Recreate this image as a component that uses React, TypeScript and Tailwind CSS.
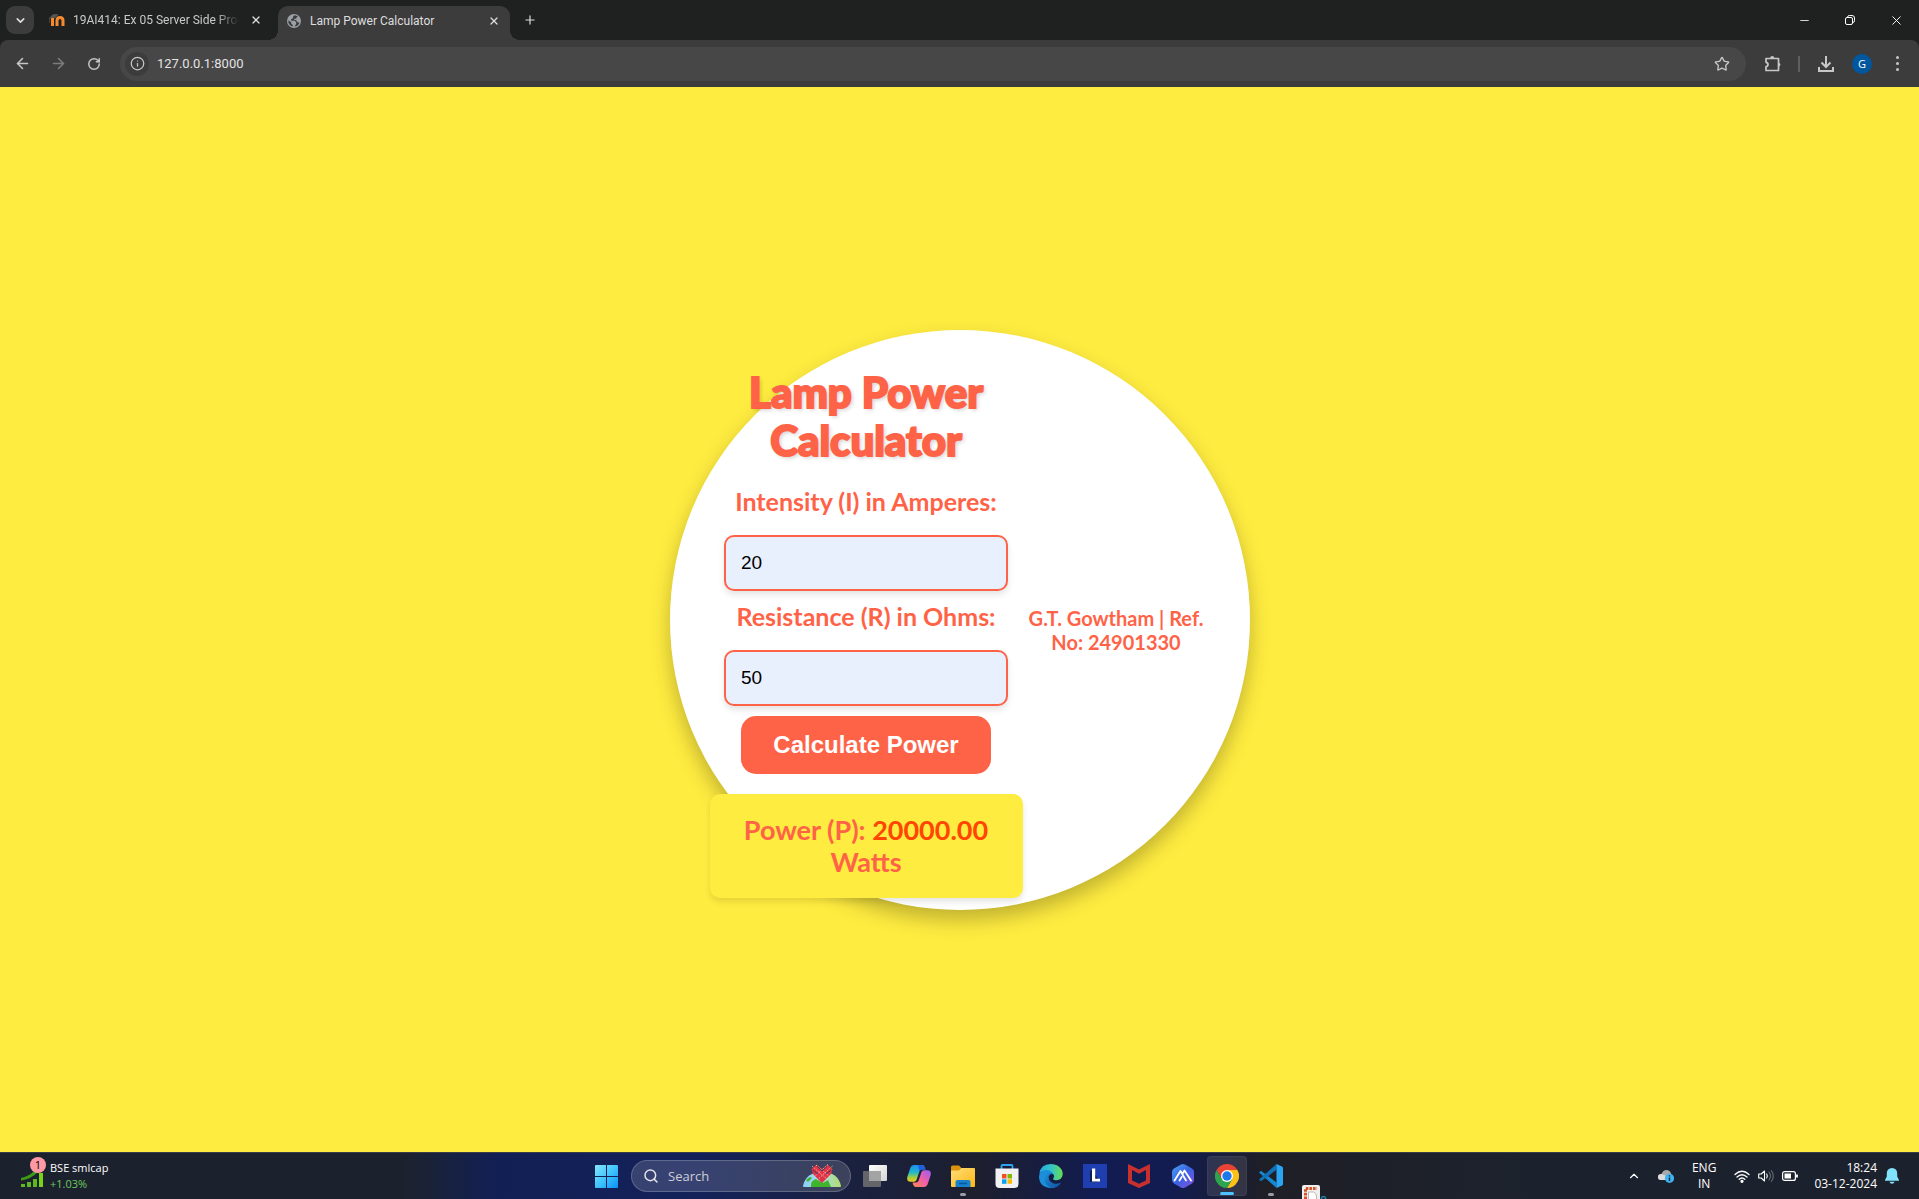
import { useState, type ReactNode } from 'react';
import {
  ArrowLeft,
  ArrowRight,
  ChevronDown,
  ChevronUp,
  Info,
  Minus,
  Plus,
  RotateCw,
  Search,
  Star,
  X,
} from 'lucide-react';

function MoodleIcon() {
  return (
    <svg viewBox="0 0 18 14" className="h-[14px] w-[18px] shrink-0" fill="none">
      <path d="M1 5.500 5 1.500h5L7 5H1.500v5" fill="#5a5550" stroke="#5a5550" strokeWidth=".6" />
      <path d="M4.500 13V5M9 13V7.500q0-3 3-3t3 3V13" stroke="#f68a2e" strokeWidth="3" />
    </svg>
  );
}

function GlobeIcon() {
  return (
    <svg viewBox="0 0 14 14" className="h-[14px] w-[14px] shrink-0">
      <circle cx="7" cy="7" r="7" fill="#9aa0a6" />
      <path
        d="M7.500 1.300 6 2.800v1.400L4.200 5v1.800h3.600l1.400 1.400v1.600L7.600 12.600q3.600-.4 4.900-3.800L10.200 8 9 6H7.200V4.800H9.400V3.400L11 2.600Q9.500 1.400 7.500 1.300ZM1.400 6.200q-.5 5 4.400 6.400V11L4.200 9.800V8.300Z"
        fill="#3c3c3c"
      />
    </svg>
  );
}

function RestoreIcon() {
  return (
    <svg viewBox="0 0 10 10" className="h-[10px] w-[10px]" fill="none" stroke="#fff">
      <rect x=".5" y="2.500" width="7" height="7" rx="1.500" />
      <path d="M2.500 2.300Q2.600.5 4.300.5H7q2.500 0 2.500 2.500v2.700q0 1.700-1.800 1.800" />
    </svg>
  );
}

function ExtensionIcon() {
  return (
    <svg viewBox="0 0 18 18" className="h-[18px] w-[18px]" fill="none" stroke="#c7c7c7" strokeWidth="1.700" strokeLinejoin="round">
      <path d="M2 3.500h12.500v12H2v-3.800q2-.3 2-2.200T2 7.300Z" />
      <path d="M6.200 3a2 2 0 0 1 4 0ZM15 7.700a2 2 0 0 1 0 3.800Z" fill="#c7c7c7" stroke="none" />
    </svg>
  );
}

function DownloadIcon() {
  return (
    <svg viewBox="0 0 16 16" className="h-4 w-4" fill="none" stroke="#c7c7c7" strokeWidth="2">
      <path d="M8 0v10.500M3.500 6.500 8 11l4.500-4.500M1 11v4h14v-4" />
    </svg>
  );
}

function StocksIcon() {
  return (
    <svg viewBox="0 0 24 22" className="h-[22px] w-6">
      <path d="M1 13Q10 11 15 5l-1-1.500 6-1-1 6-1.500-1Q11 14 1 15.500Z" fill="#3f9a16" />
      <g fill="#5fb81c">
        <rect x="1" y="19" width="4" height="3" />
        <rect x="7" y="17" width="4" height="5" />
        <rect x="13" y="14" width="4" height="8" />
        <rect x="19" y="8" width="4" height="14" fill="#78d216" />
      </g>
    </svg>
  );
}

function WindowsIcon() {
  return (
    <svg viewBox="0 0 23 23" className="h-[23px] w-[23px]">
      <defs>
        <linearGradient id="win" x1="0" y1="0" x2="1" y2="1">
          <stop offset="0" stopColor="#86e4fd" />
          <stop offset=".5" stopColor="#41c5fb" />
          <stop offset="1" stopColor="#0a90f8" />
        </linearGradient>
      </defs>
      <path d="M0 1q0-1 1-1h10v11H0ZM12 0h10q1 0 1 1v10H12ZM0 12h11v11H1q-1 0-1-1ZM12 12h11v10q0 1-1 1H12Z" fill="url(#win)" />
    </svg>
  );
}

function HeartHillIcon() {
  return (
    <svg viewBox="0 0 38 24" className="h-6 w-[38px]">
      <defs>
        <linearGradient id="hill">
          <stop offset="0" stopColor="#8ccdf5" />
          <stop offset=".45" stopColor="#9fdcf2" />
          <stop offset="1" stopColor="#b5dc6a" />
        </linearGradient>
      </defs>
      <path d="M0 22Q3 8 19 8t19 14q0 1-1 1H1q-1 0-1-1Z" fill="url(#hill)" />
      <path d="M8 23q-1-6 5-8l7 4 5-3 3 7ZM3 16l4-3 2 1-4 4Z" fill="#3fb52c" />
      <path d="m8.500 5 5-4.500L19 5l5.500-4.500 5 4.500-1.500 5-9 9-9-9Z" fill="#e03444" />
      <path d="m9 2 16 14M13 1l14 12M25 .5 11 13M29.500 2 13 17" stroke="#fbd5d8" strokeWidth=".7" strokeDasharray="1.500 1.300" />
      <path d="m10 6 5 4M14 2l5 5M28 6l-5 4M24 2l-5 5" stroke="#2e4463" strokeWidth="1" />
    </svg>
  );
}

function TaskViewIcon() {
  return (
    <svg viewBox="0 0 24 22" className="h-[22px] w-6">
      <defs>
        <linearGradient id="tv" x1="0" y1="0" x2="1" y2="1">
          <stop offset="0" stopColor="#fff" />
          <stop offset="1" stopColor="#d4d4d4" />
        </linearGradient>
      </defs>
      <rect x="6" width="18" height="16" rx="1" fill="url(#tv)" />
      <rect y="6" width="18" height="16" rx="1" fill="#6e6e6e" opacity=".88" />
      <path d="M6 6h12v10H6Z" fill="#a3a3a3" />
    </svg>
  );
}

function CopilotIcon() {
  return (
    <svg viewBox="0 0 24 22" className="h-[22px] w-6">
      <defs>
        <linearGradient id="cpa" x1="0" y1="0" x2="0" y2="1">
          <stop offset="0" stopColor="#1b8ff0" />
          <stop offset=".45" stopColor="#22b8c9" />
          <stop offset=".75" stopColor="#a6cf3c" />
          <stop offset="1" stopColor="#f4c81f" />
        </linearGradient>
        <linearGradient id="cpb" x1="1" y1="0" x2="0" y2="1">
          <stop offset="0" stopColor="#9a5cf5" />
          <stop offset=".5" stopColor="#ef5fa8" />
          <stop offset="1" stopColor="#ff8a4c" />
        </linearGradient>
      </defs>
      <path d="M7 0h8q2 0 2.700 2l.8 2.500H15q-2 0-2.600 2L9.500 15q-.6 1.800-2.500 1.800H3.500Q-.5 16.800.3 12L3.300 3Q4.300 0 7 0Z" fill="url(#cpa)" />
      <path d="M11 0h4q2 0 2.700 2l.8 2.500H15q-2 0-2.600 2Z" fill="#1f5fe0" />
      <path d="M17 22H9q-2 0-2.700-2l-.8-2.500H9q2 0 2.600-2L14.500 7q.6-1.800 2.500-1.800h3.500q4 0 3.200 4.800l-3 9Q19.700 22 17 22Z" fill="url(#cpb)" />
    </svg>
  );
}

function FolderIcon() {
  return (
    <svg viewBox="0 0 24 22" className="h-[22px] w-6">
      <defs>
        <linearGradient id="fold" x1="0" y1="0" x2="1" y2="1">
          <stop offset="0" stopColor="#ffdd7a" />
          <stop offset="1" stopColor="#fdb813" />
        </linearGradient>
      </defs>
      <path d="M0 2q0-1.500 1.500-1.500H8L10.500 3H22v6H0Z" fill="#d9930d" />
      <path d="M0 5.500h8L10.500 3H23q1 0 1 1v17q0 1-1 1H1q-1 0-1-1Z" fill="url(#fold)" />
      <path d="M4.500 22v-5q0-2 2-2h11q2 0 2 2v5Z" fill="#1781cf" />
      <path d="M8 18.500h8" stroke="#0a5796" strokeWidth="1.500" />
    </svg>
  );
}

function StoreIcon() {
  return (
    <svg viewBox="0 0 24 24" className="h-6 w-6">
      <path d="M6.500 5V2q0-1 1-1h9q1 0 1 1v3" fill="none" stroke="#2ba7ef" strokeWidth="1.800" />
      <path d="M.5 4.500h23V20q0 4-4 4h-15q-4 0-4-4Z" fill="#f1f1f3" />
      <path d="M7 10h4.500v4.500H7Z" fill="#f25022" />
      <path d="M12.500 10H17v4.500h-4.500Z" fill="#7fba00" />
      <path d="M7 15.300h4.500v4.500H7Z" fill="#00a4ef" />
      <path d="M12.500 15.300H17v4.500h-4.500Z" fill="#ffb900" />
    </svg>
  );
}

function EdgeIcon() {
  return (
    <svg viewBox="0 0 24 24" className="h-6 w-6">
      <defs>
        <linearGradient id="edA" x1="0" y1=".3" x2="1" y2=".3">
          <stop offset="0" stopColor="#2aa8e6" />
          <stop offset=".5" stopColor="#33c4c9" />
          <stop offset="1" stopColor="#68dd50" />
        </linearGradient>
        <linearGradient id="edB" x1="0" y1="0" x2="1" y2="1">
          <stop offset="0" stopColor="#1c90dc" />
          <stop offset="1" stopColor="#0f4f9e" />
        </linearGradient>
      </defs>
      <path d="M.3 10Q1.500 0 12 0q7.500 0 10.800 6Q25 11 22 14.500q-2 2-5.500 1.700-3-.2-2.400-1.500 1.500-2 .6-4Q13 8 9 7 3 6 .3 10Z" fill="url(#edA)" />
      <path d="M0 12q.8-6 7-6 5.500.3 7.300 4.200Q10.500 9 9 12q-1.500 4.500 2.500 7.500 4.500 2.800 10.300-.8Q18 24 12 24 0 23.500 0 12Z" fill="#1c8fdb" />
      <path d="M8 9.500q3-2 6.500.8Q10.500 9 9.700 12.500q-.5 5 5 7 3.600 1 7.100-.8Q19 23.700 13 24 6 22 5.500 16 5.500 12 8 9.500Z" fill="url(#edB)" />
    </svg>
  );
}

function LIcon() {
  return (
    <svg viewBox="0 0 24 24" className="h-6 w-6">
      <path d="M0 0h24v24H0Z" fill="#1f3fb0" />
      <path d="M7 7v11h7l2-1.500L9 6Z" fill="#0c1f4a" />
      <path d="M9 4.500h3.200v10.300H17v2.700H9Z" fill="#fff" />
    </svg>
  );
}

function McAfeeIcon() {
  return (
    <svg viewBox="0 0 22 24" className="h-6 w-[22px]">
      <path d="m0 0 11 5.500L22 0v19l-11 5-11-5Zm4 6v10.500l7 3.300 7-3.300V6l-7 3.800Z" fill="#c8302f" />
    </svg>
  );
}

function PeakIcon() {
  return (
    <svg viewBox="0 0 22 24" className="h-6 w-[22px]">
      <defs>
        <linearGradient id="peak" x1="0" y1="0" x2="1" y2="1">
          <stop offset="0" stopColor="#4ba3f7" />
          <stop offset=".5" stopColor="#3a62e2" />
          <stop offset="1" stopColor="#8a4fe0" />
        </linearGradient>
      </defs>
      <path d="M11 0q1 0 2 .6l7 4q2 1.200 2 3.400v8q0 2.200-2 3.400l-7 4q-2 1.200-4 0l-7-4Q0 18.200 0 16V8q0-2.200 2-3.400l7-4Q10 0 11 0Z" fill="url(#peak)" />
      <path d="m2.500 16.500 6-9.500L14 16.500M7.500 16.500l2.200-3.500M11 9l1.500-2.500L19 16.500" fill="none" stroke="#fff" strokeWidth="1.800" strokeLinecap="round" strokeLinejoin="round" />
    </svg>
  );
}

function ChromeIcon() {
  return (
    <svg viewBox="0 0 24 24" className="h-6 w-6">
      <path d="M1.600 6A12 12 0 0 1 22.400 6H12L7 15Z" fill="#ea4335" />
      <path d="M22.400 6A12 12 0 0 1 12 24l5.200-9L12 6Z" fill="#fbc116" />
      <path d="M1.600 6A12 12 0 0 0 12 24l5.200-9H6.800Z" fill="#2ea44f" />
      <circle cx="12" cy="12" r="6" fill="#fff" />
      <circle cx="12" cy="12" r="4.700" fill="#1f78ea" />
    </svg>
  );
}

function CodeIcon() {
  return (
    <svg viewBox="0 0 24 24" className="h-6 w-6">
      <path d="m0 8.500 2-1.800 15.500 11.800V24Z" fill="#1488d0" />
      <path d="M0 15.500 17.500 0v5.800L2 17.300Z" fill="#0f72b8" />
      <path d="m17.500 0 5.500 2.500q1 .5 1 1.500v16q0 1-1 1.500L17.500 24Z" fill="#2aa5f3" />
    </svg>
  );
}

function SnipIcon() {
  return (
    <svg viewBox="0 0 26 14" className="h-[14px] w-[26px]">
      <path d="M0 2q0-2 2-2h14q2 0 2 2v12H0Z" fill="#f1eeee" />
      <path d="M3.500 14V3.500H15" fill="none" stroke="#d3542a" strokeWidth="3" strokeDasharray="2.600 1" />
      <path d="M6.500 14V7h5q3 1 3 4v3" fill="#fff" stroke="#b9b9b9" />
      <circle cx="21.500" cy="13.500" r="2" fill="none" stroke="#1d7fa8" strokeWidth="1.500" />
    </svg>
  );
}

function CloudIcon() {
  return (
    <svg viewBox="0 0 16 14" className="h-[14px] w-4">
      <path d="M3 11Q0 11 0 8t3.500-3Q5 1 8.500 1t4.500 3.500l1 3V11Z" fill="#a9a9a9" />
      <path d="M3 11Q0 11 0 8t3.500-3l5 2V11Z" fill="#dcdcdc" />
      <circle cx="11.500" cy="9.300" r="4.600" fill="#3fb2f0" />
      <path d="M11.500 8.500v3.500M11.500 6.200v1.300" stroke="#0b2c45" strokeWidth="1.400" />
    </svg>
  );
}

function WifiIcon() {
  return (
    <svg viewBox="0 0 16 13" className="h-[13px] w-4" fill="none" stroke="#fff" strokeWidth="1.300" strokeLinecap="round">
      <path d="M1 4.500q7-6.500 14 0M3 7q5-4.600 10 0M5.200 9.300q2.800-2.600 5.600 0" />
      <circle cx="8" cy="11.300" r="1" fill="#fff" />
    </svg>
  );
}

function VolumeIcon() {
  return (
    <svg viewBox="0 0 16 14" className="h-[14px] w-4" fill="none" stroke="#fff" strokeWidth="1.100" strokeLinecap="round" strokeLinejoin="round">
      <path d="M.7 5v4h2.500L6.500 12V2L3.200 5Z" />
      <path d="M8.700 5q1.300 2 0 4" />
      <path d="M11 3q3 4 0 8M13.300 1.500q4 5.500 0 11" stroke="#686c74" />
    </svg>
  );
}

function BatteryIcon() {
  return (
    <svg viewBox="0 0 16 10" className="h-[10px] w-4" fill="none" stroke="#fff" strokeWidth="1.200">
      <rect x=".6" y=".6" width="12.800" height="8.800" rx="2" />
      <rect x="2.500" y="2.500" width="6.500" height="5" fill="#fff" stroke="none" />
      <path d="M15 3.500v3" strokeWidth="1.800" />
    </svg>
  );
}

function BellIcon() {
  return (
    <svg viewBox="0 0 14 16" className="h-4 w-[14px]" fill="#82e3fd">
      <path d="M7 0q5 .3 5.200 5v3.500L14 12v.8H0V12l1.800-3.500V5Q2 .3 7 0ZM4.500 13.800h5Q9 15.800 7 15.800t-2.500-2Z" />
    </svg>
  );
}

function TaskItem({ label, active, mark, children }: { label: string; active?: boolean; mark?: string; children: ReactNode }) {
  return (
    <button
      aria-label={label}
      className={
        active
          ? 'relative flex h-10 w-10 mx-0.5 items-center justify-center rounded border border-white/5 bg-white/10'
          : 'relative flex h-10 w-11 items-center justify-center'
      }
    >
      {children}
      {mark && <span className={mark} />}
    </button>
  );
}

function TitleBar() {
  return (
    <div className="flex h-10 items-center bg-[#1f2120] font-[Roboto,sans-serif] text-xs text-[#dedede]">
      <button aria-label="Search tabs" className="ml-[6px] flex h-7 w-7 items-center justify-center rounded-[9px] bg-[#3c3c3c]">
        <ChevronDown size={13} strokeWidth={3} />
      </button>
      <div className="ml-[14px] flex w-[230px] items-center">
        <MoodleIcon />
        <span className="ml-[7px] w-[166px] whitespace-nowrap text-[#c9c9c9] [mask-image:linear-gradient(to_right,black_86%,transparent)]">
          19AI414: Ex 05 Server Side Proc
        </span>
        <button aria-label="Close tab" className="ml-[11px]">
          <X size={12} strokeWidth={2.5} />
        </button>
      </div>
      <div className="relative flex h-[34px] w-[232px] items-center self-end rounded-t-[10px] bg-[#3c3c3c] pb-[5px]">
        <span className="absolute bottom-0 -left-[10px] h-[10px] w-[10px] bg-[radial-gradient(circle_at_0_0,#1f2120_10px,#3c3c3c_10px)]" />
        <span className="absolute bottom-0 -right-[10px] h-[10px] w-[10px] bg-[radial-gradient(circle_at_100%_0,#1f2120_10px,#3c3c3c_10px)]" />
        <span className="ml-[9px] flex flex-1 items-center">
          <GlobeIcon />
          <span className="ml-[9px] whitespace-nowrap">Lamp Power Calculator</span>
        </span>
        <button aria-label="Close tab" className="mr-[10px]">
          <X size={12} strokeWidth={2.5} />
        </button>
      </div>
      <button aria-label="New tab" className="ml-[13px]">
        <Plus size={14} strokeWidth={2} />
      </button>
      <div className="ml-auto flex items-center gap-[34px] pr-[15px] text-white">
        <button aria-label="Minimize"><Minus size={13} strokeWidth={1.5} /></button>
        <button aria-label="Restore"><RestoreIcon /></button>
        <button aria-label="Close"><X size={15} strokeWidth={1.5} /></button>
      </div>
    </div>
  );
}

function ToolBar() {
  const [url, setUrl] = useState('127.0.0.1:8000');
  return (
    <div className="bg-[#1f2120]">
      <div className="flex h-[47px] items-center rounded-t-lg bg-[#3c3c3c] text-[#c7c7c7]">
        <button aria-label="Back" className="ml-[14px]"><ArrowLeft size={17} strokeWidth={2.2} /></button>
        <button aria-label="Forward" className="ml-[19px] text-[#7c7c7c]"><ArrowRight size={17} strokeWidth={2.2} /></button>
        <button aria-label="Reload" className="ml-5"><RotateCw size={14} strokeWidth={2.5} /></button>
        <div className="ml-[19px] flex h-[34px] flex-1 items-center rounded-full bg-[#474747] pr-4 pl-[5px]">
          <button aria-label="Site information" className="flex h-6 w-6 items-center justify-center rounded-full bg-[#3c3c3c]">
            <Info size={15} strokeWidth={2} />
          </button>
          <input
            aria-label="Address"
            value={url}
            onChange={(e) => setUrl(e.target.value)}
            className="ml-2 min-w-0 flex-1 bg-transparent font-[Roboto,sans-serif] text-[13px] text-[#e3e3e3] outline-none"
          />
          <button aria-label="Bookmark"><Star size={16} strokeWidth={2} /></button>
        </div>
        <button aria-label="Extensions" className="ml-[18px]"><ExtensionIcon /></button>
        <span className="ml-4 h-4 w-0.5 bg-[#5e5e5e]" />
        <button aria-label="Downloads" className="ml-[18px]"><DownloadIcon /></button>
        <button aria-label="Profile" className="ml-[18px] flex h-5 w-5 items-center justify-center rounded-full bg-[#00579e] text-[11px] leading-none text-white">
          G
        </button>
        <button aria-label="Menu" className="mr-5 ml-6 flex flex-col gap-[3px]">
          <span className="h-[3px] w-[3px] rounded-full bg-[#c7c7c7]" />
          <span className="h-[3px] w-[3px] rounded-full bg-[#c7c7c7]" />
          <span className="h-[3px] w-[3px] rounded-full bg-[#c7c7c7]" />
        </button>
      </div>
    </div>
  );
}

const fieldClass =
  'mt-[19px] mb-[10px] h-14 w-[284px] rounded-[10px] border-2 border-[#ff6347] bg-[#e8f0fe] px-[15px] font-["Liberation_Sans",sans-serif] text-[19px] text-black shadow-[0_4px_6px_rgba(0,0,0,0.1)] outline-none';

function Calculator() {
  const [intensity, setIntensity] = useState('20');
  const [resistance, setResistance] = useState('50');
  const [power, setPower] = useState(20000);
  return (
    <main className="flex flex-1 items-center justify-center bg-[#ffec40] font-[Lato,sans-serif] text-[#ff6347]">
      <div className="flex aspect-square w-[580px] items-center rounded-full bg-white px-10 text-center shadow-[0_10px_20px_rgba(0,0,0,0.25)]">
        <form
          className="mt-[26px] flex w-[313px] shrink-0 flex-col items-center"
          onSubmit={(e) => {
            e.preventDefault();
            setPower(Number(intensity) ** 2 * Number(resistance));
          }}
        >
          <h1 className="mb-[22px] w-[284px] text-[42px] leading-[48px] font-black [-webkit-text-stroke:2px_#ff6347] [text-shadow:2px_2px_4px_rgba(0,0,0,0.2)]">
            Lamp Power Calculator
          </h1>
          <label htmlFor="intensity" className="text-[25px] leading-[30px] font-bold">
            Intensity (I) in Amperes:
          </label>
          <input id="intensity" value={intensity} onChange={(e) => setIntensity(e.target.value)} className={fieldClass} />
          <label htmlFor="resistance" className="text-[25px] leading-[30px] font-bold">
            Resistance (R) in Ohms:
          </label>
          <input id="resistance" value={resistance} onChange={(e) => setResistance(e.target.value)} className={fieldClass} />
          <button className='h-[58px] w-[250px] rounded-[15px] bg-[#ff6347] font-["Liberation_Sans",sans-serif] text-2xl font-bold text-white'>
            Calculate Power
          </button>
          <output className="mt-5 block w-full rounded-[10px] bg-[#ffec40] px-5 py-5 text-[27px] leading-8 font-bold shadow-[0_4px_6px_rgba(0,0,0,0.1)]">
            Power (P): <strong className="font-bold text-[#ff4500]">{power.toFixed(2)}</strong> Watts
          </output>
        </form>
        <p className="mt-5 flex-1 text-xl leading-6 font-bold">
          G.T. Gowtham | Ref.
          <br />
          No: 24901330
        </p>
      </div>
    </main>
  );
}

const dot = 'absolute bottom-0 h-[3px] w-[6px] rounded-full bg-[#9a9ba5]';

function TaskBar() {
  return (
    <footer className="grid h-[47px] grid-cols-[1fr_auto_1fr] items-center border-t border-[#3a3d48] bg-[linear-gradient(90deg,#1c222d_0%,#1c222d_21%,#121f55_26%,#14225a_36%,#1a2140_44%,#1d1f2e_51%,#121c50_57%,#121c50_61%,#1f1f26_66%,#1c222d_80%)] text-xs leading-4 text-white">
      <button className="relative flex items-center pl-5 text-left">
        <StocksIcon />
        <span className="absolute top-[-3px] left-[30px] flex h-4 w-4 items-center justify-center rounded-full bg-[#ff99a4] text-[11px] text-black">1</span>
        <span className="ml-[6px] text-[11px]">
          BSE smlcap
          <br />
          <span className="text-[#6ccb5f]">+1.03%</span>
        </span>
      </button>
      <div className="flex h-full items-center overflow-hidden pl-0.5">
        <TaskItem label="Start"><WindowsIcon /></TaskItem>
        <div className="mr-0.5 ml-[3px] flex h-8 w-[220px] items-center rounded-full border border-white/20 bg-white/15 pr-[9px] pl-[11px]">
          <Search size={16} strokeWidth={2.2} className="text-[#e4e4ea]" />
          <input aria-label="Search" placeholder="Search" className="ml-[9px] min-w-0 flex-1 bg-transparent text-[13px] outline-none placeholder:text-[#ccced8]" />
          <HeartHillIcon />
        </div>
        <TaskItem label="Task view"><TaskViewIcon /></TaskItem>
        <TaskItem label="Copilot"><CopilotIcon /></TaskItem>
        <TaskItem label="File Explorer" mark={dot}><FolderIcon /></TaskItem>
        <TaskItem label="Microsoft Store"><StoreIcon /></TaskItem>
        <TaskItem label="Edge"><EdgeIcon /></TaskItem>
        <TaskItem label="Lenovo"><LIcon /></TaskItem>
        <TaskItem label="McAfee"><McAfeeIcon /></TaskItem>
        <TaskItem label="Peak"><PeakIcon /></TaskItem>
        <TaskItem label="Chrome" active mark="absolute bottom-0 h-[3px] w-[14px] rounded-full bg-[#4cc2ff]"><ChromeIcon /></TaskItem>
        <TaskItem label="Code" mark={dot}><CodeIcon /></TaskItem>
        <button aria-label="Snipping Tool" className="flex w-11 justify-center self-end">
          <SnipIcon />
        </button>
      </div>
      <div className="flex items-center justify-end pr-5 text-center">
        <button aria-label="Hidden icons"><ChevronUp size={14} strokeWidth={2} /></button>
        <button aria-label="OneDrive" className="ml-[17px]"><CloudIcon /></button>
        <button className="ml-[18px]">
          ENG
          <br />
          IN
        </button>
        <button aria-label="Network and sound" className="ml-[18px] flex items-center gap-2">
          <WifiIcon />
          <VolumeIcon />
          <BatteryIcon />
        </button>
        <button className="ml-4 text-right">
          18:24
          <br />
          03-12-2024
        </button>
        <button aria-label="Notifications" className="ml-2"><BellIcon /></button>
      </div>
    </footer>
  );
}

export default function App() {
  return (
    <div className='flex min-h-screen flex-col font-["Open_Sans",sans-serif]'>
      <TitleBar />
      <ToolBar />
      <Calculator />
      <TaskBar />
    </div>
  );
}
